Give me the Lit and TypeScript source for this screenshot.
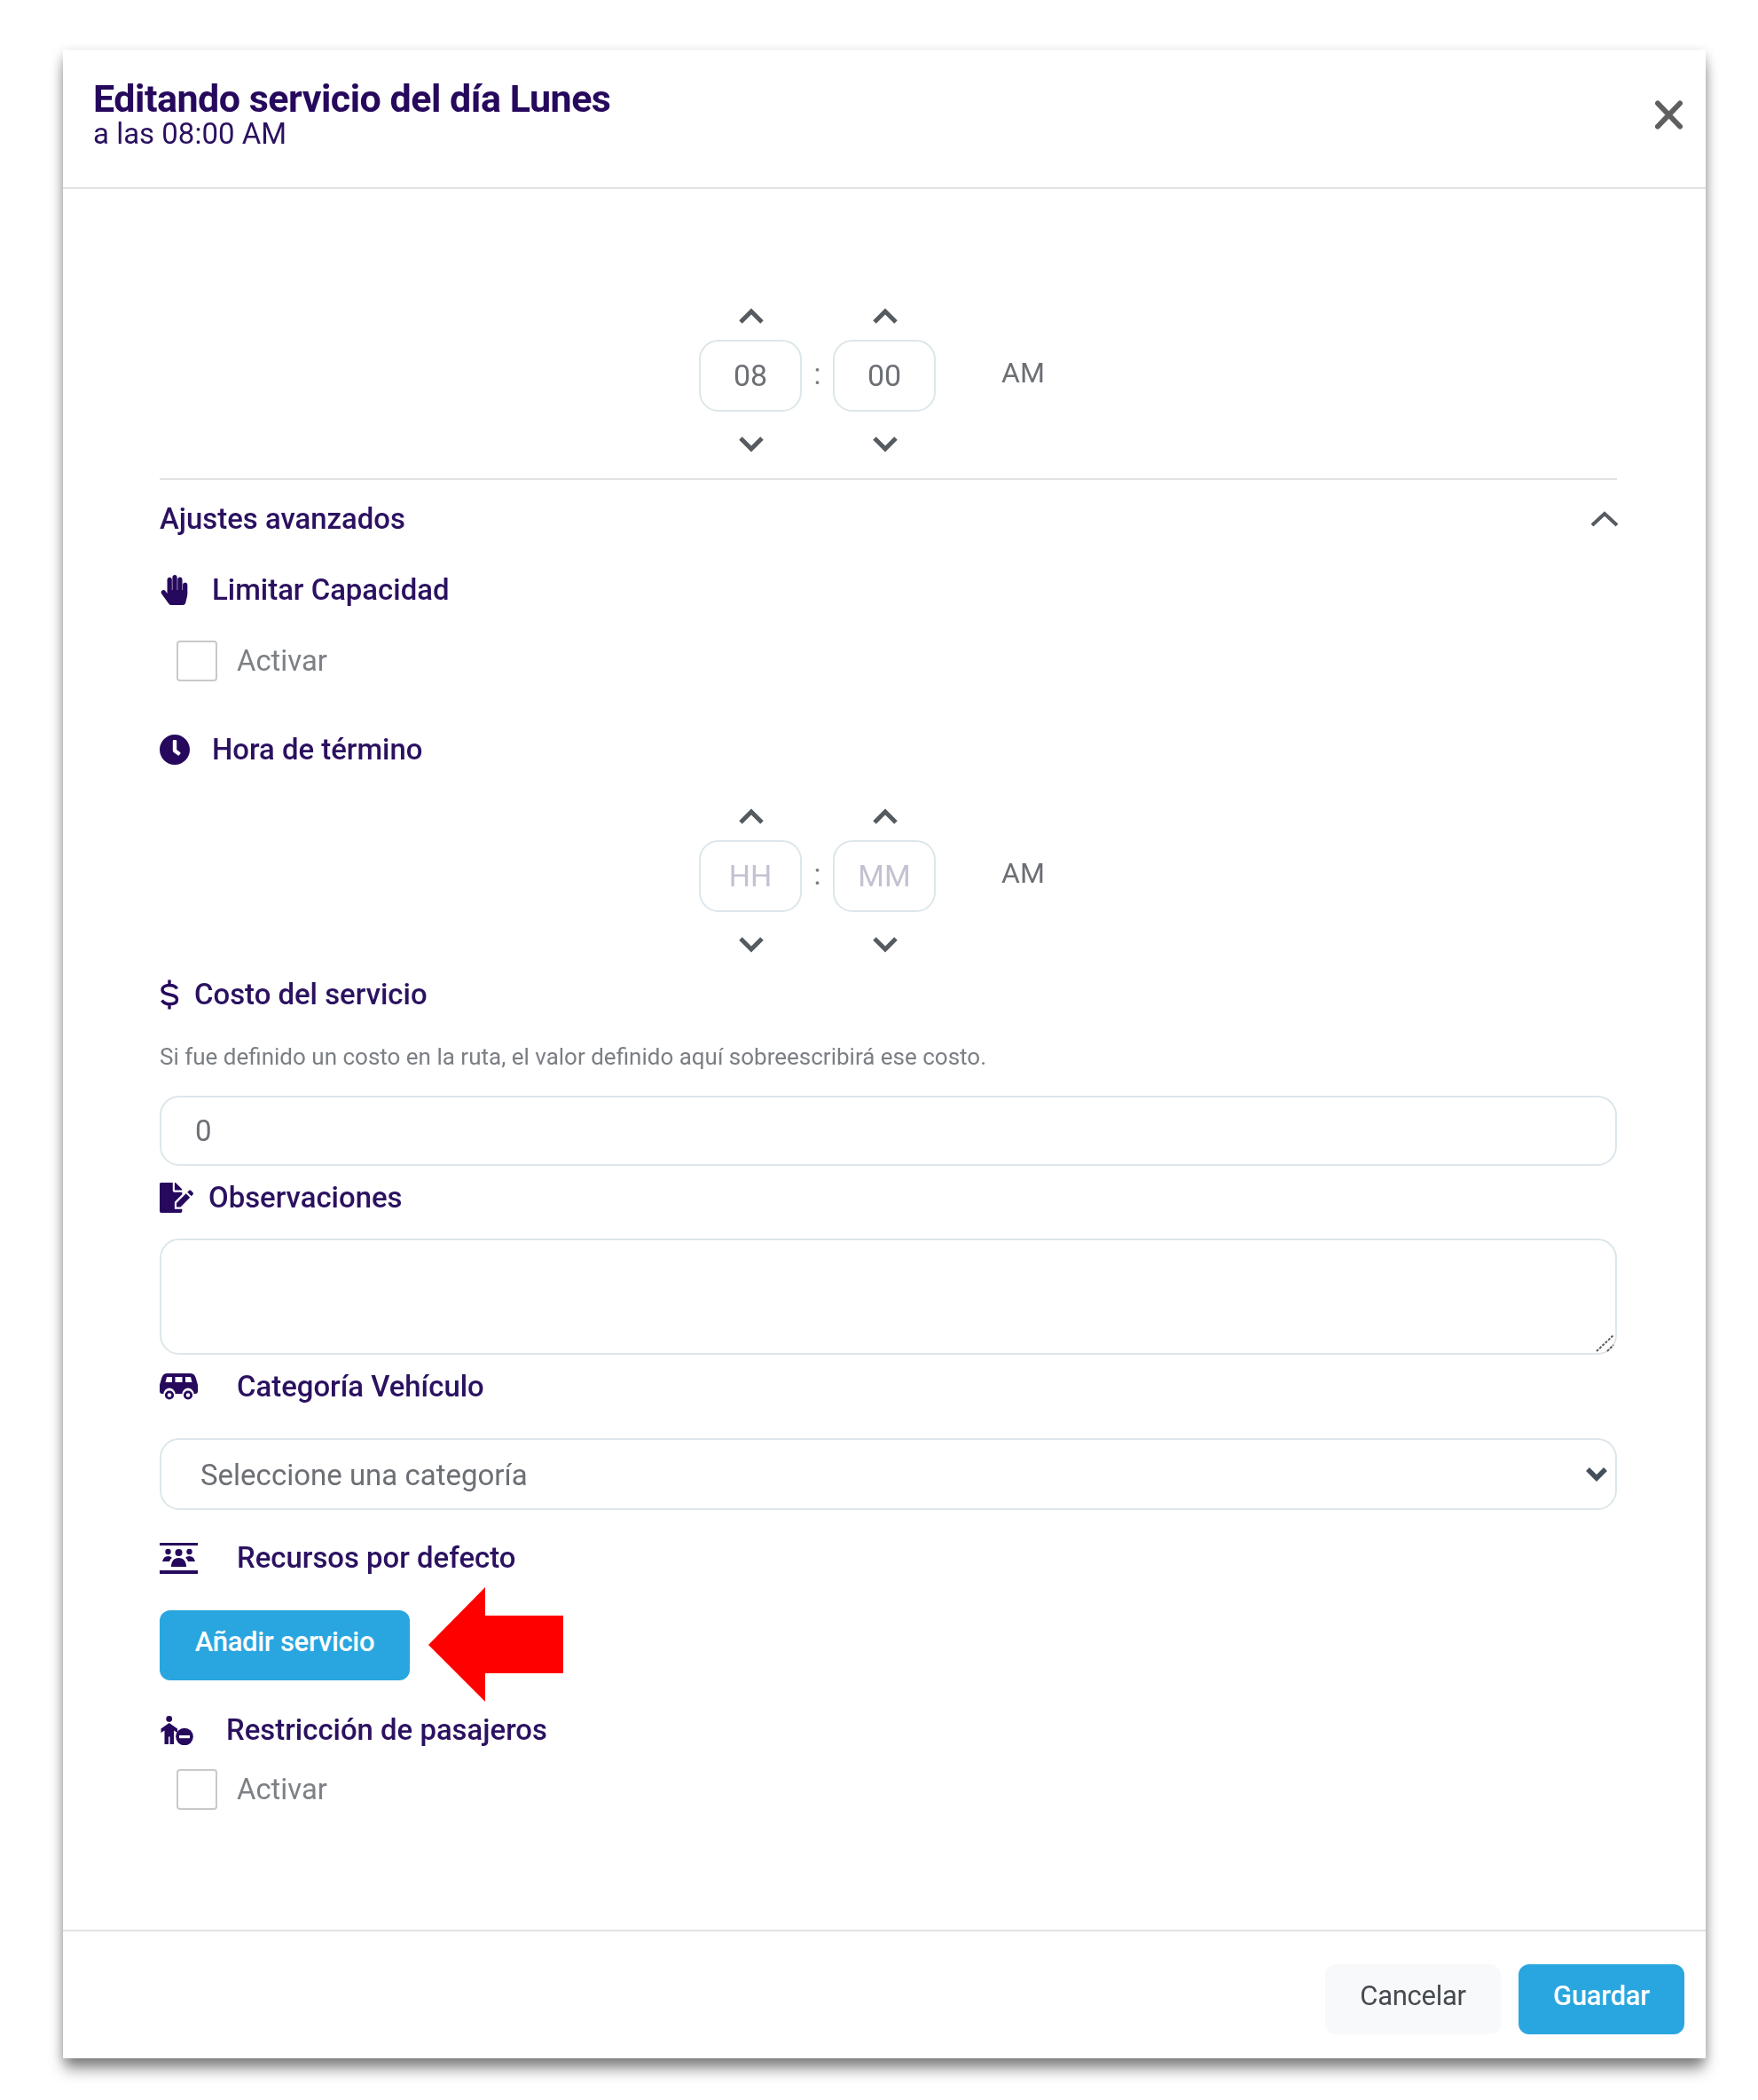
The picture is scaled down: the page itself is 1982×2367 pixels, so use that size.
import { LitElement, html, css, svg } from "lit";
import { customElement } from "lit/decorators.js";

const chevUp = svg`<polyline points="3,16 15,4 27,16"></polyline>`;
const chevDown = svg`<polyline points="3,4 15,16 27,4"></polyline>`;

const icons = {
  hand: html`<svg class="ic" width="33" height="34" viewBox="0 0 448 512"><path d="M408.781 128.007C386.356 127.578 368 146.36 368 168.79V256h-8V79.79c0-22.43-18.356-41.212-40.781-40.783C297.488 39.423 280 57.169 280 79v177h-8V40.79C272 18.36 253.644-.422 231.219.007 209.488.423 192 18.169 192 40v216h-8V80.79c0-22.43-18.356-41.212-40.781-40.783C121.488 40.423 104 58.169 104 80v235.992l-31.648-43.519c-12.993-17.866-38.009-21.817-55.877-8.823-17.865 12.994-21.815 38.01-8.822 55.877l125.601 172.705A48 48 0 0 0 171.08 512h197.786c22.28 0 41.626-15.329 46.73-37.016l26.508-112.66a192.011 192.011 0 0 0 5.079-43.991V168c.001-21.83-17.487-39.577-39.218-39.993z"/></svg>`,
  clock: html`<svg class="ic" width="34" height="34" viewBox="8 8 496 496"><path d="M256,8C119,8,8,119,8,256S119,504,256,504,504,393,504,256,393,8,256,8Zm92.49,313h0l-20,25a16,16,0,0,1-22.49,2.5h0l-67-49.72a40,40,0,0,1-15-31.23V112a16,16,0,0,1,16-16h32a16,16,0,0,1,16,16V256l58,42.5A16,16,0,0,1,348.49,321Z"/></svg>`,
  dollar: html`<svg class="ic" width="22" height="34" viewBox="0 0 22 34"><path fill="none" stroke="#26095c" stroke-width="3.400" d="M19.500 10.500C18 7.500 15 6.500 11 6.500 6 6.500 3 8.500 3 11.500 3 15 6.500 16 11 17 16 18 19.500 19 19.500 22.700 19.500 26 16 27.700 11 27.700 7.500 27.700 4.500 26.500 2.500 23.500M11 .5V6.500M11 27.700V33.500"/></svg>`,
  file: html`<svg class="ic" width="38" height="34" viewBox="0 0 576 512"><path d="M0 24C0 10.700 10.700 0 24 0H224V136C224 149.200 234.800 160 248 160H384V200L256 327V448L384 447.750V488C384 501.300 373.300 512 360 512H24C10.700 512 0 501.300 0 488ZM384 121.900C384 115.600 381.500 109.500 377 105L279.100 7C274.600 2.500 268.500 0 262.100 0H256V128H384ZM288 346.960V416H356.990L518.670 253.220 450.790 185.340ZM568.540 167.330 536.670 135.460C526.730 125.520 510.600 125.520 500.660 135.460L473.410 162.710 541.290 230.590 568.540 203.340C578.490 193.400 578.490 177.270 568.540 167.330Z"/></svg>`,
  van: html`<svg class="ic" width="43" height="30" viewBox="0 0 43 30"><path fill-rule="evenodd" d="M8 0H35C38 0 40 2 41 6L43 13V20C43 22 42 23 40 23H38.500A6.500 6.500 0 0 0 25.500 23H17.500A6.500 6.500 0 0 0 4.500 23H3C1 23 0 22 0 20V13L2 6C3 2 5 0 8 0ZM8 4 6.500 10H14V4ZM17.500 4V10H25.500V4ZM29 4V10H36.500L35 4Z"/><circle cx="11" cy="24.500" r="3.700" fill="none" stroke="#26095c" stroke-width="2.800"/><circle cx="32" cy="24.500" r="3.700" fill="none" stroke="#26095c" stroke-width="2.800"/></svg>`,
  users: html`<svg class="ic" width="43" height="35" viewBox="0 0 43 35"><rect x="0" y="0" width="43" height="3"/><rect x="0" y="31" width="43" height="4"/><circle cx="21.500" cy="11" r="4"/><circle cx="9.500" cy="10" r="3.200"/><circle cx="33.500" cy="10" r="3.200"/><path d="M13 27c0-6 3-10 8.500-10S30 21 30 27ZM3 21c1-4 3-6 6.500-6 2 0 3.500.7 4.500 2-1.500 1-2.500 2.500-3 4ZM40 21c-1-4-3-6-6.500-6-2 0-3.500.7-4.500 2 1.500 1 2.500 2.500 3 4Z"/></svg>`,
  person: html`<svg class="ic" width="38" height="33" viewBox="0 0 38 33"><circle cx="10.700" cy="3.400" r="3.400"/><path d="M10.700 8 20 14.500V19L16 16.500V32H11.500V23.500H10V32H5.500V16.500L1.500 19V14.500Z"/><circle cx="28" cy="23.500" r="9.800"/><rect x="22" y="22" width="12" height="3.200" fill="#fff"/></svg>`,
};

@customElement("time-picker")
class TimePicker extends LitElement {
  static properties = { hour: {}, minute: {} };
  hour = "";
  minute = "";
  static styles = css`
    :host { display: flex; justify-content: center; }
    .picker { display: flex; width: 427px; }
    .col { display: flex; flex-direction: column; align-items: center; width: 116px; }
    .spin { height: 36px; display: flex; align-items: center; justify-content: center; padding-left: 2px; }
    .up { margin-bottom: 8px; }
    .down { margin-top: 18px; }
    svg { fill: none; stroke: #555b60; stroke-width: 5; width: 30px; height: 20px; }
    input {
      box-sizing: border-box; width: 116px; height: 81px; border: 2px solid #dde6ea; border-radius: 22px;
      text-align: center; font: 400 34px Roboto, sans-serif; color: #6c7075; background: #fff; outline: none; padding: 0 0 2px;
    }
    input::placeholder { color: #c2c2d2; opacity: 1; }
    .colon { width: 35px; padding-top: 44px; height: 81px; text-align: center; font: 400 33px/78px Roboto, sans-serif; color: #7a7f84; }
    .am { width: 160px; padding: 43px 0 0 74px; box-sizing: border-box; font: 400 32px/76px Roboto, sans-serif; color: #6c7075; }
  `;
  private col(v: string, p: string) {
    return html`<div class="col">
      <div class="spin up"><svg viewBox="0 0 30 20">${chevUp}</svg></div>
      <input .value=${v} placeholder=${p} />
      <div class="spin down"><svg viewBox="0 0 30 20">${chevDown}</svg></div>
    </div>`;
  }
  render() {
    return html`<div class="picker">
      ${this.col(this.hour, "HH")}
      <div class="colon">:</div>
      ${this.col(this.minute, "MM")}
      <div class="am">AM</div>
    </div>`;
  }
}

@customElement("app-root")
export class AppRoot extends LitElement {
  static styles = css`
    :host { display: block; background: #fff; min-height: 2367px; font-family: Roboto, "Liberation Sans", sans-serif; padding: 56px 59px 0 71px; box-sizing: border-box; }
    .card {
      width: 1852px; height: 2264px; background: #fff; display: flex; flex-direction: column;
      box-shadow: 0 14px 16px -2px rgba(0,0,0,.42), 0 4px 12px rgba(0,0,0,.22); filter: blur(.7px);
    }
    header {
      height: 155px; flex: none; border-bottom: 2px solid #e2e2e2; box-sizing: content-box;
      display: flex; justify-content: space-between; padding: 0 26px 0 34px; align-items: flex-start;
    }
    h1 { margin: 0; padding-top: 35px; font: 700 43px/40px Roboto, sans-serif; color: #26095c; letter-spacing: -.5px; }
    .sub { font: 400 33px/40px Roboto, sans-serif; color: #2b1160; }
    .close { margin-top: 57px; width: 31px; height: 33px; fill: none; stroke: #5f5f5f; stroke-width: 6; stroke-linecap: round; }
    .body { flex: 1; padding: 126px 100px 0 109px; display: flex; flex-direction: column; }
    .divider { height: 2px; background: #e2e2e2; margin-top: 21px; }
    .label { display: flex; align-items: center; height: 44px; font: 500 32.900px/44px Roboto, sans-serif; color: #2b1160; flex: none; }
    .ic { fill: #26095c; flex: none; display: block; }
    .g18 { gap: 17px; } .g26 { gap: 26px; } .g25 { gap: 25px; } .g37 { gap: 37px; } .g44 { gap: 44px; }
    .adv { justify-content: space-between; margin-top: 22px; }
    .adv svg { width: 32px; height: 20px; fill: none; stroke: #555b60; stroke-width: 4; margin-right: -2px; }
    .limit { margin-top: 36px; }
    .check { display: flex; align-items: center; gap: 22px; height: 46px; padding-left: 19px; font: 400 32.800px/46px Roboto, sans-serif; color: #7d8185; flex: none; }
    .check input { appearance: none; margin: 0; width: 46px; height: 46px; box-sizing: border-box; border: 2px solid #c9c9c9; border-radius: 4px; background: #fff; }
    .c1 { margin-top: 35px; }
    .end { margin-top: 55px; }
    .tp { margin-top: 36px; }
    .cost { margin-top: 17px; }
    .hint { margin-top: 33px; height: 30px; font: 400 26px/30px Roboto, sans-serif; color: #7b7f84; }
    .field {
      display: block; box-sizing: border-box; width: 100%; border: 2px solid #dde6ea; border-radius: 22px; background: #fff;
      font: 400 33px Roboto, sans-serif; color: #6c7075; outline: none; margin: 0;
    }
    .num { margin-top: 29px; height: 79px; padding: 0 38px; }
    .obs { margin-top: 14px; }
    .area-wrap { position: relative; margin-top: 24px; height: 131px; flex: none; }
    .area { height: 131px; resize: none; }
    .grip { position: absolute; right: 3px; bottom: 3px; width: 21px; height: 20px; fill: none; stroke: #5c5c5c; stroke-width: 2; stroke-dasharray: 3 1.500; }
    .cat { margin-top: 14px; }
    .sel-wrap { position: relative; margin-top: 36px; flex: none; }
    select.field { height: 81px; padding: 2px 44px 0; appearance: none; }
    .sel-wrap svg { position: absolute; right: 10px; top: 32px; width: 26px; height: 18px; fill: none; stroke: #454f5b; stroke-width: 5.500; pointer-events: none; }
    .res { margin-top: 32px; }
    .add-row { position: relative; margin-top: 37px; flex: none; height: 79px; }
    button { border: none; font: 500 31px Roboto, sans-serif; border-radius: 12px; letter-spacing: -.3px; padding: 0 0 9px; }
    .primary { background: #29a6df; color: #fff; }
    .add { width: 282px; height: 79px; display: block; }
    .arrow { position: absolute; left: 303px; top: -26px; width: 152px; height: 129px; fill: #ff0000; }
    .rest { margin-top: 34px; }
    .c2 { margin-top: 22px; }
    footer { flex: none; height: 145px; box-sizing: border-box; border-top: 2px solid #e2e2e2; display: flex; justify-content: flex-end; gap: 20px; padding: 37px 24px 0 0; }
    .cancel { width: 198px; height: 79px; background: #f8f9fa; color: #454a50; font-weight: 400; }
    .save { width: 187px; height: 79px; }
  `;
  render() {
    return html`<div class="card">
      <header>
        <div>
          <h1>Editando servicio del día Lunes</h1>
          <div class="sub">a las 08:00 AM</div>
        </div>
        <svg class="close" viewBox="0 0 31 33"><path d="M3 3.500 28 29.500M28 3.500 3 29.500"></path></svg>
      </header>
      <div class="body">
        <time-picker hour="08" minute="00"></time-picker>
        <div class="divider"></div>
        <div class="label adv"><span>Ajustes avanzados</span><svg viewBox="0 0 32 20"><polyline points="2,17 16,4 30,17"></polyline></svg></div>
        <div class="label limit g26">${icons.hand}<span>Limitar Capacidad</span></div>
        <label class="check c1"><input type="checkbox" /><span>Activar</span></label>
        <div class="label end g25">${icons.clock}<span>Hora de término</span></div>
        <time-picker class="tp"></time-picker>
        <div class="label cost g18">${icons.dollar}<span>Costo del servicio</span></div>
        <div class="hint">Si fue definido un costo en la ruta, el valor definido aquí sobreescribirá ese costo.</div>
        <input class="field num" value="0" />
        <div class="label obs g18">${icons.file}<span>Observaciones</span></div>
        <div class="area-wrap">
          <textarea class="field area"></textarea>
          <svg class="grip" viewBox="0 0 21 20"><path d="M1 19 20 1M13 19 20 12"></path></svg>
        </div>
        <div class="label cat g44">${icons.van}<span>Categoría Vehículo</span></div>
        <div class="sel-wrap">
          <select class="field"><option>Seleccione una categoría</option></select>
          <svg viewBox="0 0 26 18"><polyline points="3,3 13,13 23,3"></polyline></svg>
        </div>
        <div class="label res g44">${icons.users}<span>Recursos por defecto</span></div>
        <div class="add-row">
          <button class="primary add">Añadir servicio</button>
          <svg class="arrow" viewBox="0 0 152 129"><polygon points="0,65 64,0 64,32 152,32 152,97 64,97 64,129"></polygon></svg>
        </div>
        <div class="label rest g37">${icons.person}<span>Restricción de pasajeros</span></div>
        <label class="check c2"><input type="checkbox" /><span>Activar</span></label>
      </div>
      <footer>
        <button class="cancel">Cancelar</button>
        <button class="primary save">Guardar</button>
      </footer>
    </div>`;
  }
}
